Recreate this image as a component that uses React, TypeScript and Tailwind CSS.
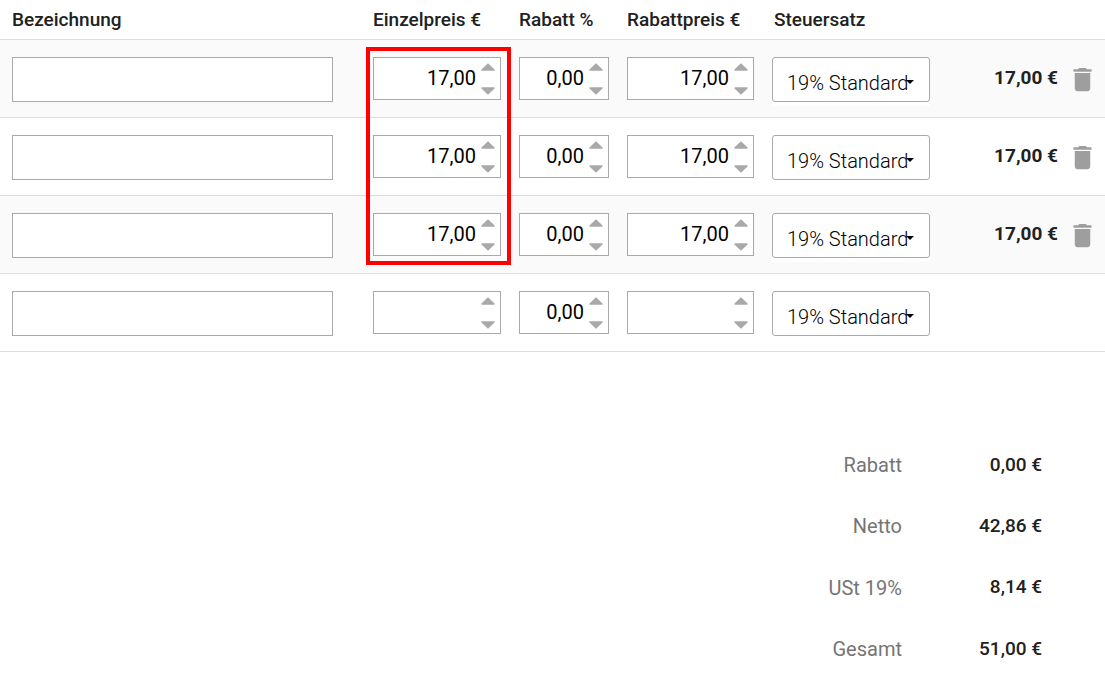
import { useState } from 'react';

interface Item {
  name: string;
  price: string;
  discount: string;
  discountPrice: string;
  total?: string;
}

const initialItems: Item[] = [
  { name: '', price: '17,00', discount: '0,00', discountPrice: '17,00', total: '17,00 €' },
  { name: '', price: '17,00', discount: '0,00', discountPrice: '17,00', total: '17,00 €' },
  { name: '', price: '17,00', discount: '0,00', discountPrice: '17,00', total: '17,00 €' },
  { name: '', price: '', discount: '0,00', discountPrice: '' },
];

const summary = [
  { label: 'Rabatt', value: '0,00 €' },
  { label: 'Netto', value: '42,86 €' },
  { label: 'USt 19%', value: '8,14 €' },
  { label: 'Gesamt', value: '51,00 €' },
];

function step(value: string, delta: number) {
  const n = parseFloat(value.replace(',', '.')) || 0;
  return Math.max(0, n + delta).toFixed(2).replace('.', ',');
}

interface NumberFieldProps {
  label: string;
  value: string;
  onChange: (value: string) => void;
}

function NumberField({ label, value, onChange }: NumberFieldProps) {
  return (
    <div className="flex h-[43px] border border-[#a9a9a9] bg-white pr-[5px]">
      <input
        type="text"
        inputMode="decimal"
        aria-label={label}
        value={value}
        onChange={(e) => onChange(e.target.value)}
        className="w-0 min-w-0 flex-1 bg-transparent pr-[5px] text-right text-[20px] text-black outline-none"
      />
      <div className="flex flex-col justify-between pt-[5px] pb-1">
        <button type="button" aria-label={`${label} erhöhen`} onClick={() => onChange(step(value, 1))}>
          <svg viewBox="0 0 14 8" className="block h-2 w-3.5" fill="#a9a9a9">
            <path d="M7 0.3 L13.6 6.6 Q14 7.8 13 7.8 H1 Q0 7.8 0.4 6.6 Z" />
          </svg>
        </button>
        <button type="button" aria-label={`${label} verringern`} onClick={() => onChange(step(value, -1))}>
          <svg viewBox="0 0 14 8" className="block h-2 w-3.5" fill="#a9a9a9">
            <path d="M7 7.7 L0.4 1.4 Q0 0.2 1 0.2 H13 Q14 0.2 13.6 1.4 Z" />
          </svg>
        </button>
      </div>
    </div>
  );
}

function TaxSelect({ label }: { label: string }) {
  return (
    <div className="relative bg-white pb-1">
      <select
        aria-label={label}
        className="block h-[45px] w-full appearance-none rounded-[3px] border border-[#a9a9a9] bg-white pt-2 pl-[14px] text-[20px] font-light text-black outline-none"
      >
        <option>19% Standard</option>
        <option>7% Ermäßigt</option>
        <option>0% Steuerfrei</option>
      </select>
      <svg viewBox="0 0 8 4" className="pointer-events-none absolute top-[23px] right-4 h-1 w-2">
        <path d="M0 0h8L4 4z" />
      </svg>
    </div>
  );
}

function TrashIcon() {
  return (
    <svg viewBox="0 0 24 24" className="block size-[31px]" fill="#9e9e9e">
      <path d="M6 19c0 1.1.9 2 2 2h8c1.1 0 2-.9 2-2V7H6v12zM19 4h-3.5l-1-1h-5l-1 1H5v2h14V4z" />
    </svg>
  );
}

export default function App() {
  const [items, setItems] = useState(initialItems);

  const update = (index: number, patch: Partial<Item>) =>
    setItems(items.map((item, i) => (i === index ? { ...item, ...patch } : item)));

  return (
    <main className="min-h-screen bg-white font-[Roboto,sans-serif] text-[#212121]">
      <table className="w-full table-fixed border-collapse">
        <colgroup>
          <col />
          <col className="w-[146px]" />
          <col className="w-[108px]" />
          <col className="w-[145px]" />
          <col className="w-[176px]" />
          <col className="w-[119px]" />
          <col className="w-[47px]" />
        </colgroup>
        <thead>
          <tr className="h-[39px] border-b border-[#dddddd] text-left text-[19px] whitespace-nowrap">
            <th scope="col" className="pt-0.5 pl-3 font-medium">Bezeichnung</th>
            <th scope="col" className="pt-0.5 pl-[9px] font-medium">Einzelpreis €</th>
            <th scope="col" className="pt-0.5 pl-[9px] font-medium">Rabatt %</th>
            <th scope="col" className="pt-0.5 pl-[9px] font-medium">Rabattpreis €</th>
            <th scope="col" className="pt-0.5 pl-[11px] font-medium">Steuersatz</th>
            <td />
            <td />
          </tr>
        </thead>
        <tbody>
          {items.map((item, i) => (
            <tr key={i} className="h-[78px] border-b border-[#dddddd] align-top odd:bg-[#fafafa]">
              <td className="pt-[17px] pr-[31px] pl-3">
                <input
                  type="text"
                  aria-label={`Bezeichnung ${i + 1}`}
                  value={item.name}
                  onChange={(e) => update(i, { name: e.target.value })}
                  className="block h-[45px] w-full border border-[#a9a9a9] bg-white px-3 text-[20px] outline-none"
                />
              </td>
              <td className="relative px-[9px] pt-[17px]">
                <NumberField
                  label={`Einzelpreis ${i + 1}`}
                  value={item.price}
                  onChange={(price) => update(i, { price })}
                />
                {/* frame around the first three unit prices */}
                {i === 0 && (
                  <div className="pointer-events-none absolute top-[7px] left-[2px] z-10 h-[218px] w-[145px] border-4 border-[#ff0000]" />
                )}
              </td>
              <td className="px-[9px] pt-[17px]">
                <NumberField
                  label={`Rabatt ${i + 1}`}
                  value={item.discount}
                  onChange={(discount) => update(i, { discount })}
                />
              </td>
              <td className="px-[9px] pt-[17px]">
                <NumberField
                  label={`Rabattpreis ${i + 1}`}
                  value={item.discountPrice}
                  onChange={(discountPrice) => update(i, { discountPrice })}
                />
              </td>
              <td className="px-[9px] pt-[17px]">
                <TaxSelect label={`Steuersatz ${i + 1}`} />
              </td>
              <td className="pt-6 text-right text-[19px] leading-7 font-bold whitespace-nowrap">{item.total}</td>
              <td className="pt-6 pl-[9px]">
                {item.total && (
                  <button
                    type="button"
                    aria-label={`Position ${i + 1} löschen`}
                    onClick={() => setItems(items.filter((_, n) => n !== i))}
                    className="block"
                  >
                    <TrashIcon />
                  </button>
                )}
              </td>
            </tr>
          ))}
        </tbody>
      </table>

      <dl className="mt-[83px] flex min-h-[245px] flex-col pr-[63px]">
        {summary.map(({ label, value }) => (
          <div key={label} className="flex flex-1 items-center justify-end">
            <dt className="text-[20px] text-[#757575]">{label}</dt>
            <dd className="w-[140px] text-right text-[19px] font-medium">{value}</dd>
          </div>
        ))}
      </dl>
    </main>
  );
}
